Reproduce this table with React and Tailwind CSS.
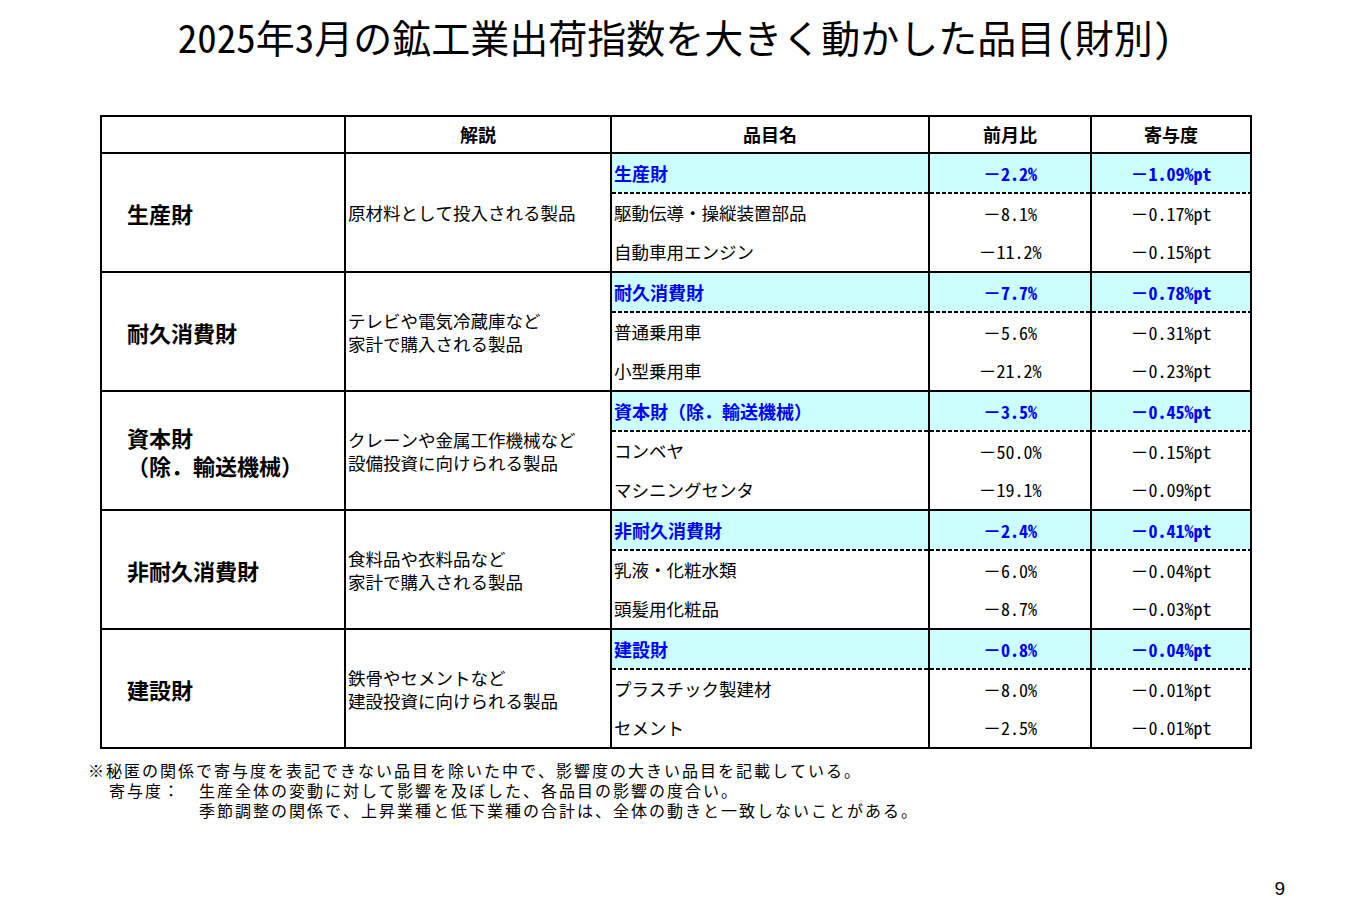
import React from 'react';

const groups = [
  {
    name: ['生産財'],
    desc: ['原材料として投入される製品'],
    rows: [
      ['生産財', '－2.2%', '－1.09%pt'],
      ['駆動伝導・操縦装置部品', '－8.1%', '－0.17%pt'],
      ['自動車用エンジン', '－11.2%', '－0.15%pt'],
    ],
  },
  {
    name: ['耐久消費財'],
    desc: ['テレビや電気冷蔵庫など', '家計で購入される製品'],
    rows: [
      ['耐久消費財', '－7.7%', '－0.78%pt'],
      ['普通乗用車', '－5.6%', '－0.31%pt'],
      ['小型乗用車', '－21.2%', '－0.23%pt'],
    ],
  },
  {
    name: ['資本財', '（除．輸送機械）'],
    desc: ['クレーンや金属工作機械など', '設備投資に向けられる製品'],
    rows: [
      ['資本財（除．輸送機械）', '－3.5%', '－0.45%pt'],
      ['コンベヤ', '－50.0%', '－0.15%pt'],
      ['マシニングセンタ', '－19.1%', '－0.09%pt'],
    ],
  },
  {
    name: ['非耐久消費財'],
    desc: ['食料品や衣料品など', '家計で購入される製品'],
    rows: [
      ['非耐久消費財', '－2.4%', '－0.41%pt'],
      ['乳液・化粧水類', '－6.0%', '－0.04%pt'],
      ['頭髪用化粧品', '－8.7%', '－0.03%pt'],
    ],
  },
  {
    name: ['建設財'],
    desc: ['鉄骨やセメントなど', '建設投資に向けられる製品'],
    rows: [
      ['建設財', '－0.8%', '－0.04%pt'],
      ['プラスチック製建材', '－8.0%', '－0.01%pt'],
      ['セメント', '－2.5%', '－0.01%pt'],
    ],
  },
];

const Dash = () => (
  <div className="h-[2px] bg-white bg-[image:repeating-linear-gradient(to_right,#000_0px,#000_4px,transparent_4px,transparent_6px)]" />
);

// one of the three right-hand columns for a group: highlight row, dashed rule, two plain rows
const ItemColumn = ({ rows, col, align }) => (
  <div className="bg-white flex flex-col">
    <div className={`h-[38px] bg-[#ccffff] flex items-center font-bold text-[18px] text-[#0000ff] ${align}`}>
      {rows[0][col]}
    </div>
    <Dash />
    <div className={`flex-1 flex items-center ${col === 0 ? 'text-[17.5px]' : 'text-[18px]'} ${align}`}>{rows[1][col]}</div>
    <div className={`flex-1 flex items-center ${col === 0 ? 'text-[17.5px]' : 'text-[18px]'} ${align}`}>{rows[2][col]}</div>
  </div>
);

export default function App() {
  return (
    <div
      className="w-[1350px] h-[900px] bg-white text-black overflow-hidden"
      style={{ fontFamily: '"Noto Sans Mono CJK JP", "Noto Sans CJK JP", sans-serif' }}
    >
      <h1 className="mt-[14px] h-[44px] leading-[44px] text-center text-[39px] font-normal">
        2025年3月の鉱工業出荷指数を大きく動かした品目(財別)
      </h1>

      <div className="ml-[100px] mt-[57px] w-[1152px] grid grid-cols-[242px_264px_316px_160px_158px] gap-[2px] bg-black p-[2px]">
        <div className="bg-white h-[35px]" />
        <div className="bg-white flex items-center justify-center font-bold text-[18px]">解説</div>
        <div className="bg-white flex items-center justify-center font-bold text-[18px]">品目名</div>
        <div className="bg-white flex items-center justify-center font-bold text-[18px]">前月比</div>
        <div className="bg-white flex items-center justify-center font-bold text-[18px]">寄与度</div>

        {groups.map((g, i) => (
          <React.Fragment key={i}>
            <div className="bg-white h-[117px] flex flex-col justify-center pl-[25px] font-bold text-[22px] leading-[28px]">
              {g.name.map((n) => (
                <span key={n}>{n}</span>
              ))}
            </div>
            <div className="bg-white flex flex-col justify-center pl-[2px] text-[17.5px] leading-[23px]">
              {g.desc.map((d) => (
                <span key={d}>{d}</span>
              ))}
            </div>
            <ItemColumn rows={g.rows} col={0} align="justify-start pl-[2px]" />
            <ItemColumn rows={g.rows} col={1} align="justify-center" />
            <ItemColumn rows={g.rows} col={2} align="justify-center" />
          </React.Fragment>
        ))}
      </div>

      <div className="ml-[88px] mt-[11px] text-[16px] tracking-[2px] leading-[20px]">
        <p>※秘匿の関係で寄与度を表記できない品目を除いた中で、影響度の大きい品目を記載している。</p>
        <div className="flex pl-[21px]">
          <span className="w-[90px] shrink-0">寄与度：</span>
          <div>
            <p>生産全体の変動に対して影響を及ぼした、各品目の影響の度合い。</p>
            <p>季節調整の関係で、上昇業種と低下業種の合計は、全体の動きと一致しないことがある。</p>
          </div>
        </div>
      </div>

      <div className="flex justify-end pr-[65px] mt-[59px] text-[19px] leading-[20px]" style={{ fontFamily: '"Liberation Sans", sans-serif' }}>
        9
      </div>
    </div>
  );
}
